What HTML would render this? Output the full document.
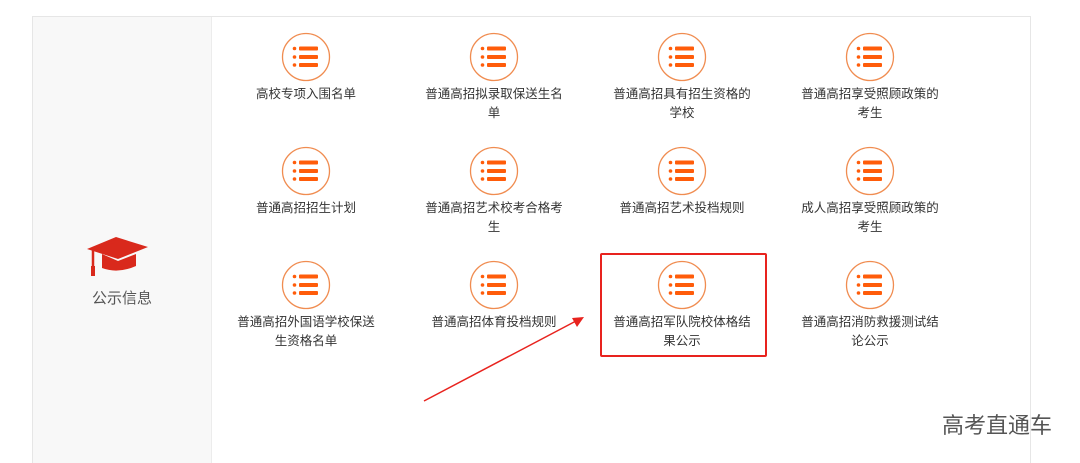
<!DOCTYPE html>
<html><head><meta charset="utf-8"><style>
html,body{margin:0;width:1080px;height:463px;background:#fff;position:relative;overflow:hidden;font-family:"Liberation Sans","Noto Sans CJK SC",sans-serif}
.panel{position:absolute;left:32px;top:16px;width:999px;height:460px;border:1px solid #e6e6e6;border-bottom:none;box-sizing:border-box}
.left{position:absolute;left:33px;top:17px;width:178px;height:460px;background:#f8f8f8;border-right:1px solid #ececec}
.item{position:absolute;width:180px;text-align:center;font-size:12.5px;color:#333;line-height:19px}
.item svg{display:block;margin:0 auto 3px}
.lbl{position:absolute;left:33px;top:287px;width:178px;text-align:center;font-size:15px;color:#555}
</style></head><body>
<div class="panel"></div>
<div class="left"></div>
<svg style="position:absolute;left:80px;top:234px" width="72" height="46" viewBox="0 0 72 46">
<path d="M7 15 L36 3 L68 13 L38 25 Z" fill="#d9291c"/>
<path d="M22 20 L22 34 Q38 40 56 32 L56 20 L38 27 Z" fill="#d9291c"/>
<path d="M36 7 L13 15 L13 34" stroke="#d9291c" stroke-width="2.5" fill="none"/>
<path d="M11 32 L15 32 L15 42 L11 42 Z" fill="#d9291c"/>
</svg>
<div class="lbl">公示信息</div>
<div id="g"></div>
<div style="position:absolute;left:600px;top:253px;width:167px;height:104px;border:2px solid #e8231e;box-sizing:border-box;border-radius:2px"></div>
<svg style="position:absolute;left:0;top:0" width="1080" height="463">
<line x1="424" y1="401" x2="576" y2="321" stroke="#e8231e" stroke-width="1.5"/>
<path d="M584 317 L572 318 L577 327 Z" fill="#e8231e"/>
</svg>
<div style="position:absolute;left:942px;top:408px;font-size:22px;color:#555">高考直通车</div>
<script>
var items=[["高校专项入围名单"],["普通高招拟录取保送生名","单"],["普通高招具有招生资格的","学校"],["普通高招享受照顾政策的","考生"],
["普通高招招生计划"],["普通高招艺术校考合格考","生"],["普通高招艺术投档规则"],["成人高招享受照顾政策的","考生"],
["普通高招外国语学校保送","生资格名单"],["普通高招体育投档规则"],["普通高招军队院校体格结","果公示"],["普通高招消防救援测试结","论公示"]];
var icon='<svg width="50" height="50" viewBox="0 0 50 50"><circle cx="25" cy="25" r="23.5" fill="none" stroke="#f08c50" stroke-width="1.3"/><g fill="#ff5c0a"><circle cx="13.5" cy="16.5" r="1.8"/><circle cx="13.5" cy="25" r="1.8"/><circle cx="13.5" cy="33" r="1.8"/><rect x="18" y="14.5" width="19" height="4" rx="1"/><rect x="18" y="23" width="19" height="4" rx="1"/><rect x="18" y="31" width="19" height="4" rx="1"/></g></svg>';
var h='';
items.forEach(function(t,i){var c=i%4,r=Math.floor(i/4);h+='<div class="item" style="left:'+(216+c*188)+'px;top:'+(32+r*114)+'px">'+icon+t.join('<br>')+'</div>';});
document.getElementById('g').innerHTML=h;
</script>
</body></html>
